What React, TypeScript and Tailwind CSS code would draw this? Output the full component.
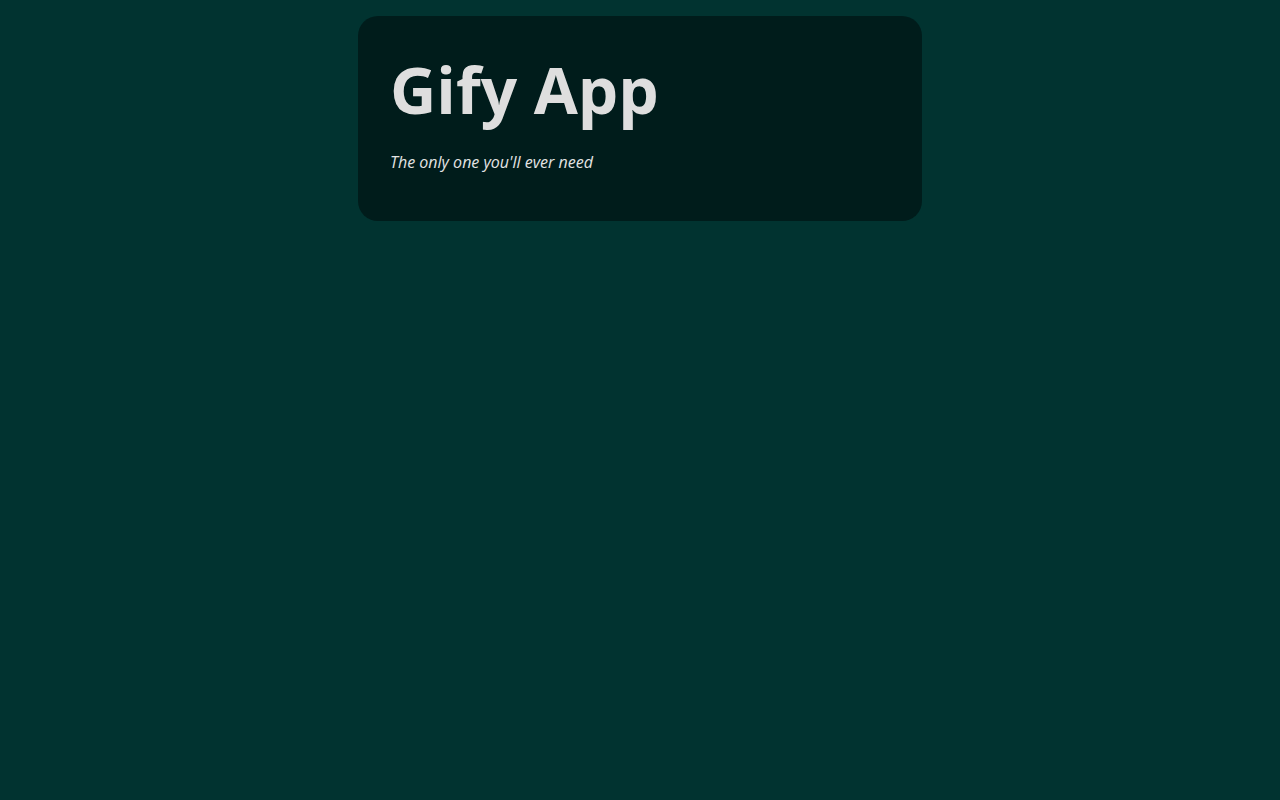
import React from "react";

/** ヘッダーカード */
const Header = () => {
  return (
    <header className="mx-auto w-[564px] rounded-[20px] bg-[#001c1b] px-8 pt-[42px] pb-[47px]">
      <h1 className="text-[64px] font-bold leading-none text-[#dedede]">Gify App</h1>
      <p className="mt-[28px] text-base leading-6 italic text-[#e4e4e4]">The only one you'll ever need</p>
    </header>
  );
};

export default function App() {
  return (
    <div className="min-h-screen bg-[#013330] pt-4 font-['Open_Sans',sans-serif]">
      <Header />
    </div>
  );
}
